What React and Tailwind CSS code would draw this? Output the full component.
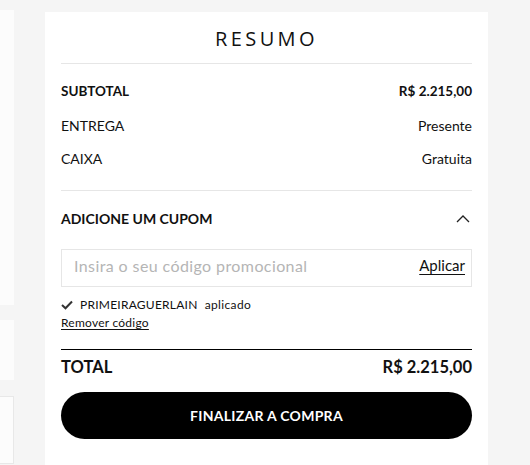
export default function App() {
  return (
    <div className="flex w-[530px] h-[465px] overflow-hidden bg-[#f5f5f5]" style={{ fontFamily: "Lato, 'Noto Sans', sans-serif" }}>
      <div className="w-[14px] flex flex-col shrink-0">
        <div className="mt-[10px] h-[295px] bg-[#fcfcfc]" />
        <div className="mt-[15px] h-[60px] bg-[#fcfcfc]" />
        <div className="mt-[16px] h-[68px] bg-[#fcfcfc] border border-l-0 border-[#e8e8e8]" />
      </div>
      <div className="ml-[31px] mt-[12px] w-[443px] bg-white px-4 flex flex-col">
        <h1 className="pt-[15px] h-[51px] text-center text-[20px] leading-[24px] font-medium tracking-[0.17em] text-[#111]" style={{ fontFamily: "'Open Sans', sans-serif" }}>RESUMO</h1>
        <div className="h-px bg-[#e6e6e6]" />
        <div className="pt-[10px] pb-[15px] flex flex-col text-[14px] text-[#111]">
          <div className="h-[34px] flex items-center justify-between font-bold text-[13.5px]">
            <span>SUBTOTAL</span>
            <span>R$ 2.215,00</span>
          </div>
          <div className="h-[34px] flex items-center justify-between">
            <span>ENTREGA</span>
            <span>Presente</span>
          </div>
          <div className="h-[33px] flex items-center justify-between">
            <span>CAIXA</span>
            <span>Gratuita</span>
          </div>
        </div>
        <div className="h-px bg-[#e6e6e6]" />
        <div className="mt-[18px] h-[18px] flex items-center justify-between">
          <span className="font-bold text-[14px] text-[#111]">ADICIONE UM CUPOM</span>
          <svg width="14" height="9" viewBox="0 0 14 9" className="mr-[2px]" fill="none" stroke="#222" strokeWidth="1.3">
            <path d="M1 8 L7 2 L13 8" />
          </svg>
        </div>
        <div className="mt-[22px] h-[38px] border border-[#e6e6e6] flex items-center justify-between pl-[12px] pr-[6px] pb-[5px]">
          <span className="text-[16px] tracking-[0.025em] text-[#b5b5b5]">Insira o seu código promocional</span>
          <span className="text-[15px] text-[#111] underline underline-offset-[3px]">Aplicar</span>
        </div>
        <div className="mt-[11px] h-[14px] flex items-center gap-[7px] text-[12px] text-[#111]">
          <svg width="12" height="10" viewBox="0 0 12 10" fill="none" stroke="#333" strokeWidth="2">
            <path d="M1 5 L4.5 8.3 L11 1.5" />
          </svg>
          <span className="tracking-[0.02em]">PRIMEIRAGUERLAIN</span>
          <span className="tracking-[0.03em]">aplicado</span>
        </div>
        <div className="mt-[4px] h-[14px] flex items-center text-[12px] text-[#111]">
          <span className="underline underline-offset-2 tracking-[0.02em]">Remover código</span>
        </div>
        <div className="mt-[19px] h-px bg-black" />
        <div className="mt-[7px] h-[20px] flex items-center justify-between font-bold text-[16.5px] text-[#111]">
          <span>TOTAL</span>
          <span>R$ 2.215,00</span>
        </div>
        <button className="mt-[15px] h-[47px] w-full rounded-full bg-black text-white font-bold text-[14px] tracking-[0.02em]">
          FINALIZAR A COMPRA
        </button>
      </div>
    </div>
  );
}
